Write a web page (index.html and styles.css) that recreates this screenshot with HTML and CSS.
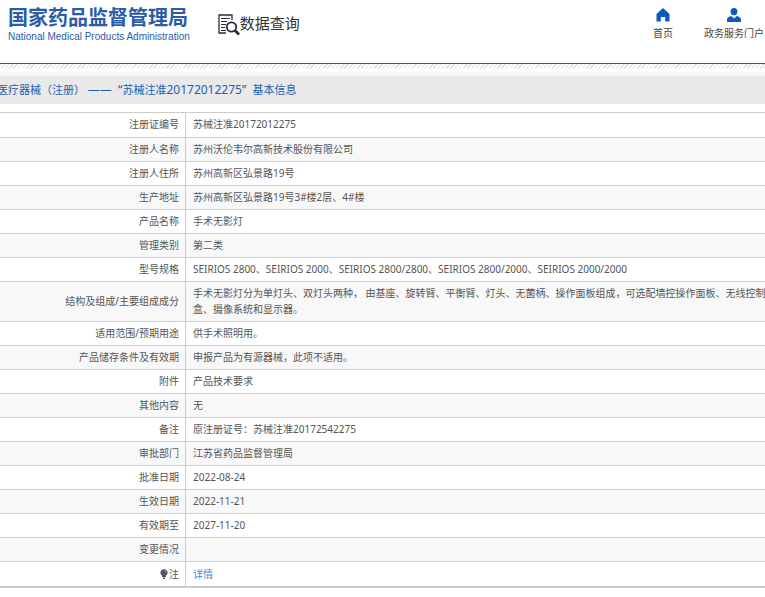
FILE: index.html
```html
<!DOCTYPE html>
<html lang="zh-CN">
<head>
  <meta charset="UTF-8" />
  <meta name="viewport" content="width=device-width, initial-scale=1" />
  <title>国家药品监督管理局 数据查询</title>
  <link rel="stylesheet" href="styles.css">
</head>
<body>
  <header class="header">
    <div class="brand">
      <div class="logo">
        <div class="logo-cn">国家药品监督管理局</div>
        <div class="logo-en">National Medical Products Administration</div>
      </div>
      <div class="search-title">
        <svg class="search-icon" viewBox="0 0 22 22" width="22" height="22" fill="none" stroke="#2c2c38">
          <path d="M14 6V1H1v18h7" stroke-width="1.3" />
          <path d="M3 4.500h9M3 7.500h6M3 10.500h5M3 13.500h4M3 16.500h5" stroke-width="1.100" />
          <circle cx="13.500" cy="13" r="4.700" stroke-width="1.800" />
          <path d="M17 16.500l4 4" stroke-width="2.600" />
        </svg>
        <span>数据查询</span>
      </div>
    </div>
    <nav class="nav">
      <a href="#">
        <svg viewBox="0 0 14 14" width="14" height="14" fill="#0b5cba">
          <path d="M7 0L0.500 6v7.500h4.300V9h4.400v4.500h4.300V6z" />
        </svg>
        首页
      </a>
      <a href="#">
        <svg viewBox="0 0 14 14" width="14" height="14" fill="#0b5cba">
          <ellipse cx="7" cy="3.600" rx="3.400" ry="3.600" />
          <path d="M0 14v-2.500C0 9.500 2 8.500 4.300 8L7 10.500 9.700 8C12 8.500 14 9.500 14 11.500V14z" />
        </svg>
        政务服务门户
      </a>
    </nav>
  </header>
  <div class="stripe"></div>
  <main>
    <h1 class="title">医疗器械（注册） <span class="title-num">——&nbsp;&nbsp;“</span>苏械注准<span class="title-num">20172012275”&nbsp;&nbsp;</span>基本信息</h1>
    <table class="info">
      <tbody>
        <tr><th scope="row">注册证编号</th><td>苏械注准20172012275</td></tr>
        <tr><th scope="row">注册人名称</th><td>苏州沃伦韦尔高新技术股份有限公司</td></tr>
        <tr><th scope="row">注册人住所</th><td>苏州高新区弘景路19号</td></tr>
        <tr><th scope="row">生产地址</th><td>苏州高新区弘景路19号3#楼2层、4#楼</td></tr>
        <tr><th scope="row">产品名称</th><td>手术无影灯</td></tr>
        <tr><th scope="row">管理类别</th><td>第二类</td></tr>
        <tr><th scope="row">型号规格</th><td>SEIRIOS 2800、SEIRIOS 2000、SEIRIOS 2800/2800、SEIRIOS 2800/2000、SEIRIOS 2000/2000</td></tr>
        <tr><th scope="row">结构及组成/主要组成成分</th><td>手术无影灯分为单灯头、双灯头两种， 由基座、旋转臂、平衡臂、灯头、无菌柄、操作面板组成，可选配墙控操作面板、无线控制盒、摄像系统和显示器。</td></tr>
        <tr><th scope="row">适用范围/预期用途</th><td>供手术照明用。</td></tr>
        <tr><th scope="row">产品储存条件及有效期</th><td>申报产品为有源器械，此项不适用。</td></tr>
        <tr><th scope="row">附件</th><td>产品技术要求</td></tr>
        <tr><th scope="row">其他内容</th><td>无</td></tr>
        <tr><th scope="row">备注</th><td>原注册证号：苏械注准20172542275</td></tr>
        <tr><th scope="row">审批部门</th><td>江苏省药品监督管理局</td></tr>
        <tr><th scope="row">批准日期</th><td>2022-08-24</td></tr>
        <tr><th scope="row">生效日期</th><td>2022-11-21</td></tr>
        <tr><th scope="row">有效期至</th><td>2027-11-20</td></tr>
        <tr><th scope="row">变更情况</th><td></td></tr>
        <tr>
          <th scope="row">
            <svg class="bulb" viewBox="0 0 8 10" width="8" height="10" fill="#55555a">
              <path d="M4 0a3.600 3.600 0 0 1 2 6.600V8H2V6.600A3.600 3.600 0 0 1 4 0zM2.600 8.500h2.800L4.800 10H3.200z" />
              <path d="M4.500 1.500q1.300.3 1.500 1.700" fill="none" stroke="#ddd" stroke-width=".7" />
            </svg>注</th>
          <td><a href="#">详情</a></td>
        </tr>
      </tbody>
    </table>
  </main>
</body>
</html>
```
FILE: styles.css
```css
* {
  margin: 0;
  padding: 0;
  box-sizing: border-box;
}

body {
  font-family: "Noto Sans", "Noto Sans CJK SC", sans-serif;
  font-size: 10px;
  line-height: 16px;
  color: #555;
  background: #fff;
  overflow-x: hidden;
}

a {
  color: #2e8ded;
  text-decoration: none;
}

.header {
  display: flex;
  justify-content: space-between;
  align-items: flex-start;
  height: 64px;
  padding: 6px 1px 0 8px;
  border-bottom: 1px solid #1b6496;
  white-space: nowrap;
}

.brand {
  display: flex;
  gap: 28px;
}

.logo {
  color: #2a5caa;
}

.logo-cn {
  font-size: 20px;
  font-weight: bold;
  line-height: 23px;
}

.logo-en {
  font-family: "Liberation Sans", Arial, sans-serif;
}

.search-title {
  display: flex;
  align-items: center;
  height: 34px;
  font-size: 15px;
  color: #333;
}

.search-icon {
  margin-top: 3px;
}

.nav {
  display: flex;
  gap: 31px;
  padding-top: 2px;
}

.nav a {
  display: flex;
  flex-direction: column;
  align-items: center;
  gap: 3px;
  color: #444;
}

/* hatched strip fading into the title bar */
.stripe {
  height: 12px;
  background:
    linear-gradient(rgba(255, 255, 255, 0) 4px, #fff 5px, #f5f5f5),
    repeating-linear-gradient(135deg, #ddd 0, #ddd 1px, #fff 1px, #fff 3px);
}

.title {
  height: 28px;
  margin-left: -3px;
  background: #e9e9ea;
  font-size: 11px;
  font-weight: normal;
  line-height: 28px;
  color: #1c5fb0;
  white-space: nowrap;
}

.title-num {
  font-size: 12px;
}

/* runs slightly past the right edge of the window */
.info {
  width: calc(100% + 10px);
  margin-top: 8px;
  border-top: 1px solid #ccc;
  border-bottom: 1px solid #ccc;
  border-spacing: 0;
  table-layout: fixed;
}

.info th,
.info td {
  padding: 3px 0 4px 7px;
  border-bottom: 1px solid #ccc;
  vertical-align: middle;
}

.info th {
  width: 186px;
  padding-right: 6px;
  border-right: 1px solid #ccc;
  font-weight: normal;
  text-align: right;
}

.info tr:nth-child(even) {
  background: #f8f8f8;
}

.info tr:first-child th,
.info tr:first-child td {
  padding-bottom: 5px;
}

.info tr:last-child th,
.info tr:last-child td {
  padding-top: 4px;
}

.bulb {
  margin-right: 1px;
  vertical-align: -1px;
}
```
